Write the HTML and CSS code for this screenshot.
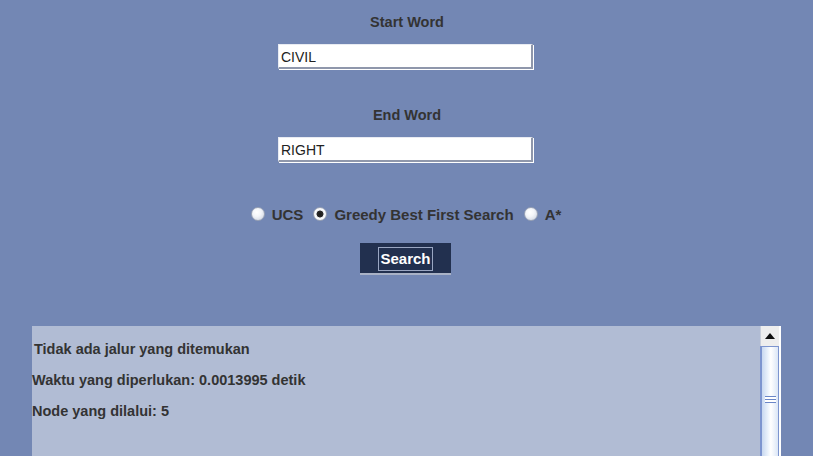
FILE: index.html
```html
<!DOCTYPE html>
<html>
<head>
<meta charset="utf-8">
<link rel="stylesheet" href="styles.css">
</head>
<body>
<div class="form">
  <div class="label">Start Word</div>
  <div class="field">CIVIL</div>
  <div class="label label-end">End Word</div>
  <div class="field">RIGHT</div>
  <div class="radios">
    <span class="radio"></span><span class="rlabel">UCS</span>
    <span class="radio checked"></span><span class="rlabel">Greedy Best First Search</span>
    <span class="radio"></span><span class="rlabel">A*</span>
  </div>
  <div class="btn"><span class="btn-focus">Search</span></div>
</div>
<div class="result">
  <div class="text">
    <p class="first">Tidak ada jalur yang ditemukan</p>
    <p>Waktu yang diperlukan: 0.0013995 detik</p>
    <p>Node yang dilalui: 5</p>
  </div>
  <div class="scrollbar">
    <div class="up"><svg width="12" height="8" viewBox="0 0 12 8"><path d="M1 7 L6 1 L11 7 Z" fill="#111"/></svg></div>
    <div class="thumb"><div class="grip"><i></i><i></i><i></i></div></div>
  </div>
</div>
</body>
</html>
```
FILE: styles.css
```css
html, body {
  margin: 0;
  padding: 0;
}
body {
  width: 813px;
  height: 456px;
  overflow: hidden;
  background: #7387b4;
  font-family: "Liberation Sans", Arial, sans-serif;
  color: #333333;
}
.form {
  display: flex;
  flex-direction: column;
  align-items: center;
  padding-top: 14px;
}
.label {
  font-weight: bold;
  font-size: 14.5px;
  line-height: 16px;
  height: 16px;
  margin-left: 1px;
}
.label-end {
  margin-top: 38px;
}
.field {
  box-sizing: border-box;
  width: 255px;
  height: 25px;
  margin-top: 14px;
  margin-left: -2px;
  background: #ffffff;
  border-top: 1px solid #e8ebf2;
  border-left: 1px solid #e8ebf2;
  border-right: 2px solid #8f97ab;
  border-bottom: 2px solid #8f97ab;
  box-shadow: 1px 1px 0 #ffffff;
  font-size: 14px;
  line-height: 25px;
  padding-left: 2px;
  color: #222222;
}
.radios {
  display: flex;
  align-items: center;
  margin-top: 44px;
  height: 16px;
  margin-left: -1px;
}
.radio {
  box-sizing: border-box;
  width: 14px;
  height: 14px;
  border-radius: 50%;
  border: 1px solid #9aa3b6;
  background: radial-gradient(circle at 40% 35%, #ffffff 0%, #f3f5f9 40%, #c9d0de 100%);
  margin-right: 7px;
}
.radio.checked {
  background: radial-gradient(circle, #1a1a1a 0%, #2a2a2a 38%, #e8ebf1 44%, #ffffff 60%, #c9d0de 100%);
}
.rlabel {
  font-weight: bold;
  font-size: 15px;
  margin-right: 10px;
}
.rlabel:last-child {
  margin-right: 0;
}
.btn {
  box-sizing: border-box;
  width: 91px;
  height: 32px;
  margin-top: 21px;
  margin-left: -2px;
  background: #22304f;
  border-bottom: 2px solid #a9b2c6;
  display: flex;
  align-items: center;
  justify-content: center;
}
.btn-focus {
  color: #ffffff;
  font-weight: bold;
  font-size: 15px;
  line-height: 20px;
  padding: 1px 1px 1px 1px;
  border: 1px solid #9aa6c2;
  margin-top: 2px;
}
.result {
  display: flex;
  margin-top: 51px;
  margin-left: 32px;
  height: 140px;
}
.text {
  width: 728px;
  background: #b1bcd4;
  font-weight: bold;
  font-size: 14.5px;
  padding-top: 15px;
}
.text p {
  margin: 0 0 15px 0;
  line-height: 16px;
}
.text p.first {
  padding-left: 2px;
}
.scrollbar {
  width: 19px;
  border-right: 2px solid #ffffff;
  background: #ffffff;
  display: flex;
  flex-direction: column;
}
.up {
  height: 20px;
  background: #eeeeee;
  border-left: 1px solid #c9cfdb;
  display: flex;
  align-items: center;
  justify-content: center;
  box-sizing: border-box;
}
.thumb {
  flex: 1;
  box-sizing: border-box;
  border: 1px solid #7d95cf;
  border-left-width: 2px;
  background: linear-gradient(to right, #c8d8f0 0%, #e9f1fb 35%, #ffffff 55%, #dbe6f6 100%);
  position: relative;
}
.grip {
  position: absolute;
  left: 3px;
  top: 49px;
  width: 11px;
  height: 7px;
  background: #ffffff;
  display: flex;
  flex-direction: column;
  justify-content: space-between;
}
.grip i {
  display: block;
  height: 1px;
  background: #6a86c8;
}
```
